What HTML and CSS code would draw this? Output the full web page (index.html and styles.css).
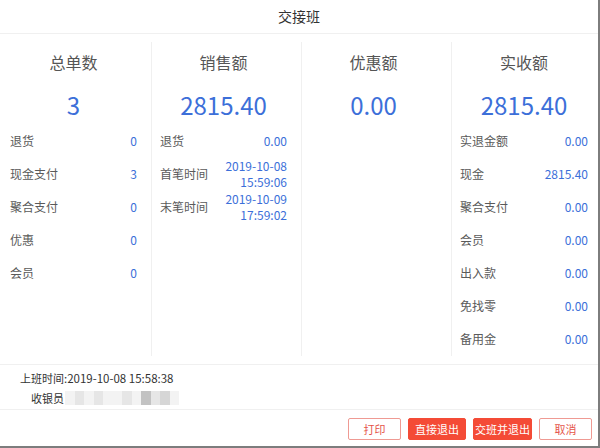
FILE: index.html
```html
<!DOCTYPE html>
<html lang="zh-CN">
<head>
<meta charset="utf-8">
<title>交接班</title>
<link rel="stylesheet" href="styles.css">
</head>
<body>
<div class="dialog">
  <div class="title">交接班</div>
  <div class="stats">
    <div class="col c1">
      <div class="head">总单数</div>
      <div class="big">3</div>
      <div class="row"><span class="lb">退货</span><span class="val">0</span></div>
      <div class="row"><span class="lb">现金支付</span><span class="val">3</span></div>
      <div class="row"><span class="lb">聚合支付</span><span class="val">0</span></div>
      <div class="row"><span class="lb">优惠</span><span class="val">0</span></div>
      <div class="row"><span class="lb">会员</span><span class="val">0</span></div>
    </div>
    <div class="col c2">
      <div class="head">销售额</div>
      <div class="big">2815.40</div>
      <div class="row"><span class="lb">退货</span><span class="val">0.00</span></div>
      <div class="row"><span class="lb">首笔时间</span><span class="val two">2019-10-08<br>15:59:06</span></div>
      <div class="row"><span class="lb">末笔时间</span><span class="val two">2019-10-09<br>17:59:02</span></div>
    </div>
    <div class="col c3">
      <div class="head">优惠额</div>
      <div class="big">0.00</div>
    </div>
    <div class="col c4">
      <div class="head">实收额</div>
      <div class="big">2815.40</div>
      <div class="row"><span class="lb">实退金额</span><span class="val">0.00</span></div>
      <div class="row"><span class="lb">现金</span><span class="val">2815.40</span></div>
      <div class="row"><span class="lb">聚合支付</span><span class="val">0.00</span></div>
      <div class="row"><span class="lb">会员</span><span class="val">0.00</span></div>
      <div class="row"><span class="lb">出入款</span><span class="val">0.00</span></div>
      <div class="row"><span class="lb">免找零</span><span class="val">0.00</span></div>
      <div class="row"><span class="lb">备用金</span><span class="val">0.00</span></div>
    </div>
  </div>
  <div class="info">
    <div class="line"><span class="ilb">上班时间</span><span class="num">:2019-10-08 15:58:38</span></div>
    <div class="line"><span class="ilb">收银员</span><span class="blur"><i class="p1"></i><i class="p2"></i><i class="p1"></i><i class="p2"></i><i class="p1"></i><i class="p1"></i><i class="p2"></i><i class="p1"></i><i class="p4"></i><i class="p2"></i><i class="p3"></i><i class="p1"></i></span></div>
  </div>
  <div class="actions">
    <button class="btn outline">打印</button>
    <button class="btn solid w58">直接退出</button>
    <button class="btn solid w59">交班并退出</button>
    <button class="btn outline">取消</button>
  </div>
</div>
</body>
</html>
```

FILE: styles.css
```css
* { box-sizing: border-box; }
html, body { margin: 0; padding: 0; background: #fff; }
body {
  font-family: "Noto Sans CJK SC", "Noto Sans", sans-serif;
  color: #555;
  width: 600px;
  height: 448px;
  overflow: hidden;
}
.dialog {
  width: 600px;
  height: 448px;
  border-right: 2px solid #7d7d7d;
  border-bottom: 2px solid #7d7d7d;
  display: flex;
  flex-direction: column;
}
.title {
  height: 34px;
  line-height: 33px;
  text-align: center;
  font-size: 14px;
  color: #333;
  border-bottom: 1px solid #f0f0f0;
}
.stats {
  display: grid;
  grid-template-columns: 151px 150px 150px 1fr;
  margin-top: 8px;
  height: 314px;
}
.col { padding: 8px 14px 0 10px; }
.c2, .c3, .c4 { border-left: 1px solid #f0f0f0; padding-left: 8px; }
.c4 { padding-right: 10px; }
.head {
  text-align: center;
  font-size: 16px;
  line-height: 24px;
  color: #555;
}
.big {
  text-align: center;
  font-size: 24px;
  line-height: 36px;
  margin-top: 13px;
  margin-bottom: 1px;
  color: #3c6fd9;
}
.row {
  height: 33px;
  display: flex;
  align-items: center;
  justify-content: space-between;
  font-size: 12px;
}
.lb { color: #5a5a5a; }
.val { color: #3c6fd9; text-align: right; }
.val.two { line-height: 16px; }
.info {
  margin-top: 8px;
  border-top: 1px solid #f0f0f0;
  border-bottom: 1px solid #f0f0f0;
  height: 46px;
  padding-top: 3px;
  font-size: 11px;
  color: #333;
}
.line { height: 20px; line-height: 20px; display: flex; align-items: center; }
.ilb { width: 64px; text-align: right; }
.num { font-size: 11.5px; }
.blur { display: flex; height: 14px; margin-left: 1px; }
.blur i { display: block; width: 9.5px; height: 14px; }
.p1 { background: #f3f3f3; }
.p2 { background: #e6e6e6; }
.p3 { background: #d6d6d6; }
.p4 { background: #c2c2c2; }
.actions {
  flex: 1;
  display: flex;
  justify-content: flex-end;
  align-items: flex-start;
  gap: 7px;
  padding: 8px 6px 0 0;
}
.btn {
  height: 22px;
  width: 53px;
  font-family: "Noto Sans CJK SC", sans-serif;
  font-size: 11px;
  border-radius: 2px;
  padding: 0;
  line-height: 20px;
}
.outline { background: #fff; border: 1px solid #ef9a93; color: #e5554a; }
.solid { background: #f44b36; border: 1px solid #f44b36; color: #fff; }
.w58 { width: 58px; }
.w59 { width: 59px; }
```
